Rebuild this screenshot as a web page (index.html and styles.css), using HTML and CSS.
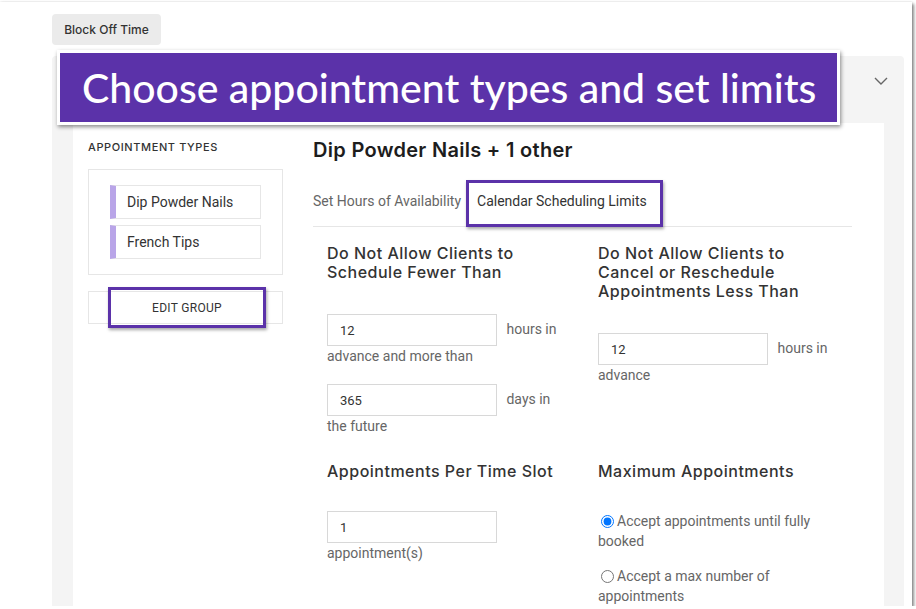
FILE: index.html
```html
<!DOCTYPE html>
<html>
  <head>
    <meta charset="utf-8" />
    <title>Calendar Scheduling Limits</title>
    <link rel="stylesheet" href="styles.css">
  </head>
  <body>
    <div class="shot">
      <button class="block-off">Block Off Time</button>

      <!-- 予約タイプのパネル -->
      <div class="panel">
        <div class="panel-head">
          <svg class="chevron" width="14" height="8" viewBox="0 0 14 8">
            <path d="M1 1 L7 7 L13 1" fill="none" stroke="#666" stroke-width="1.4" />
          </svg>
        </div>

        <div class="panel-body">
          <div class="types">
            <h3 class="types-title">Appointment Types</h3>
            <div class="types-box">
              <div class="type-item">Dip Powder Nails</div>
              <div class="type-item">French Tips</div>
            </div>
            <div class="edit-group"><span class="mark">EDIT GROUP</span></div>
          </div>

          <div class="detail">
            <h2 class="detail-title">Dip Powder Nails + 1 other</h2>
            <div class="tabs">
              <span class="tab">Set Hours of Availability</span>
              <span class="tab tab-active">Calendar Scheduling Limits</span>
            </div>

            <div class="fields">
              <div class="col">
                <h4>Do Not Allow Clients to Schedule Fewer Than</h4>
                <p class="field"><input type="text" value="12" /> hours in advance and more than</p>
                <p class="field"><input type="text" value="365" /> days in the future</p>
              </div>
              <div class="col">
                <h4>Do Not Allow Clients to Cancel or Reschedule Appointments Less Than</h4>
                <p class="field"><input type="text" value="12" /> hours in advance</p>
              </div>
              <div class="col">
                <h4>Appointments Per Time Slot</h4>
                <p class="field"><input type="text" value="1" /> appointment(s)</p>
              </div>
              <div class="col">
                <h4>Maximum Appointments</h4>
                <label class="option"><input type="radio" name="max" checked />Accept appointments until fully booked</label>
                <label class="option"><input type="radio" name="max" />Accept a max number of appointments</label>
              </div>
            </div>
          </div>
        </div>
      </div>

      <!-- 見出しバナー -->
      <div class="banner">Choose appointment types and set limits</div>
    </div>
  </body>
</html>
```

FILE: styles.css
```css
body {
  margin: 0;
  background: #fff;
  font-family: Roboto, "Liberation Sans", sans-serif;
  color: #555;
}
.shot {
  position: relative;
  width: 912px;
  height: 604px;
  margin-top: 2px;
  padding-left: 52px;
  box-sizing: border-box;
  overflow: hidden;
  background: #fff;
  box-shadow: 0 0 2px rgba(0, 0, 0, 0.15), 2px 2px 3px rgba(0, 0, 0, 0.45);
}
.block-off {
  display: block;
  margin-top: 12px;
  width: 109px;
  height: 31px;
  padding: 0;
  border: none;
  border-radius: 4px;
  background: #ebebeb;
  font-family: Inter, "Liberation Sans", sans-serif;
  font-size: 12px;
  font-weight: 500;
  color: #333;
}
.panel {
  margin-top: 11px;
  width: 852px;
  height: 600px;
  padding: 0 20px 0 21px;
  box-sizing: border-box;
  background: #f4f4f4;
  border-radius: 4px;
}
.panel-head {
  height: 67px;
  display: flex;
  justify-content: flex-end;
  align-items: flex-start;
}
.chevron {
  margin-top: 21px;
  margin-right: -4px;
}
.panel-body {
  display: grid;
  grid-template-columns: 195px 539px;
  column-gap: 30px;
  height: 100%;
  padding-left: 15px;
  background: #fff;
}

/* 左側：予約タイプ */
.types-title {
  margin: 17px 0 0;
  font-family: Inter, "Liberation Sans", sans-serif;
  font-size: 11px;
  font-weight: 500;
  line-height: 14px;
  letter-spacing: 0.6px;
  text-transform: uppercase;
  color: #333;
}
.types-box {
  margin-top: 15px;
  width: 195px;
  padding: 15px 21px;
  box-sizing: border-box;
  border: 1px solid #e6e6e6;
  display: flex;
  flex-direction: column;
  gap: 6px;
}
.type-item {
  height: 34px;
  box-sizing: border-box;
  padding-left: 11px;
  border: 1px solid #e6e6e6;
  border-left: 6px solid #b9a5e8;
  font-size: 14px;
  line-height: 32px;
  color: #333;
}
.edit-group {
  margin-top: 16px;
  width: 195px;
  height: 33px;
  box-sizing: border-box;
  border: 1px solid #e6e6e6;
  display: flex;
  justify-content: center;
  align-items: center;
}
.mark {
  display: flex;
  justify-content: center;
  align-items: center;
  width: 158px;
  height: 41px;
  margin-left: 3px;
  flex-shrink: 0;
  box-sizing: border-box;
  border: 3px solid #5b32a9;
  box-shadow: 1px 2px 3px rgba(0, 0, 0, 0.35);
  font-size: 12px;
  letter-spacing: 0.3px;
  color: #333;
}

/* 右側：詳細 */
.detail-title {
  margin: 15px 0 0;
  font-family: Inter, "Liberation Sans", sans-serif;
  font-size: 20px;
  font-weight: 600;
  line-height: 24px;
  letter-spacing: 0.3px;
  color: #1d1d1d;
}
.tabs {
  margin-top: 20px;
  display: flex;
  align-items: flex-start;
  border-bottom: 1px solid #e6e6e6;
}
.tab {
  padding: 11px 5px 17px 0;
  font-size: 14px;
  line-height: 16px;
  color: #666;
}
.tab-active {
  margin: -2px 0 -1px;
  padding: 10px 13px 15px 8px;
  border: 3px solid #5b32a9;
  box-shadow: 1px 2px 3px rgba(0, 0, 0, 0.35);
  color: #333;
}
.fields {
  display: grid;
  grid-template-columns: 271px 254px;
  row-gap: 26px;
  padding-left: 14px;
  margin-top: 17px;
}
.col h4 {
  max-width: 230px;
  margin: 0 0 32px;
  font-family: Inter, "Liberation Sans", sans-serif;
  font-size: 16px;
  font-weight: 500;
  line-height: 19px;
  letter-spacing: 0.5px;
  color: #333;
}
.col:nth-child(n+3) h4 {
  margin-bottom: 30px;
}
.field {
  width: 240px;
  margin: 0 0 18px;
  font-size: 14px;
  line-height: 20px;
  color: #666;
}
.field:last-child {
  margin-bottom: 0;
}
.field input {
  width: 170px;
  height: 32px;
  margin: 0 6px 0 0;
  padding: 0 12px;
  box-sizing: border-box;
  border: 1px solid #d8d8d8;
  vertical-align: middle;
  font-family: Roboto, "Liberation Sans", sans-serif;
  font-size: 13px;
  color: #333;
}
.option {
  display: block;
  width: 240px;
  margin-bottom: 15px;
  font-size: 14px;
  line-height: 20px;
  color: #666;
}
.option input {
  margin: 0 3px;
  width: 13px;
  height: 13px;
  vertical-align: -2px;
}

/* 見出しバナー（スクリーンショット上の注釈） */
.banner {
  position: absolute;
  left: 57px;
  top: 48px;
  width: 783px;
  height: 75px;
  box-sizing: border-box;
  border: 3px solid #fff;
  background: #5b32a9;
  box-shadow: 1px 2px 4px rgba(0, 0, 0, 0.45);
  padding-left: 22px;
  font-family: Lato, "Open Sans", sans-serif;
  font-size: 41px;
  font-weight: 500;
  line-height: 69px;
  color: #fff;
}
```
